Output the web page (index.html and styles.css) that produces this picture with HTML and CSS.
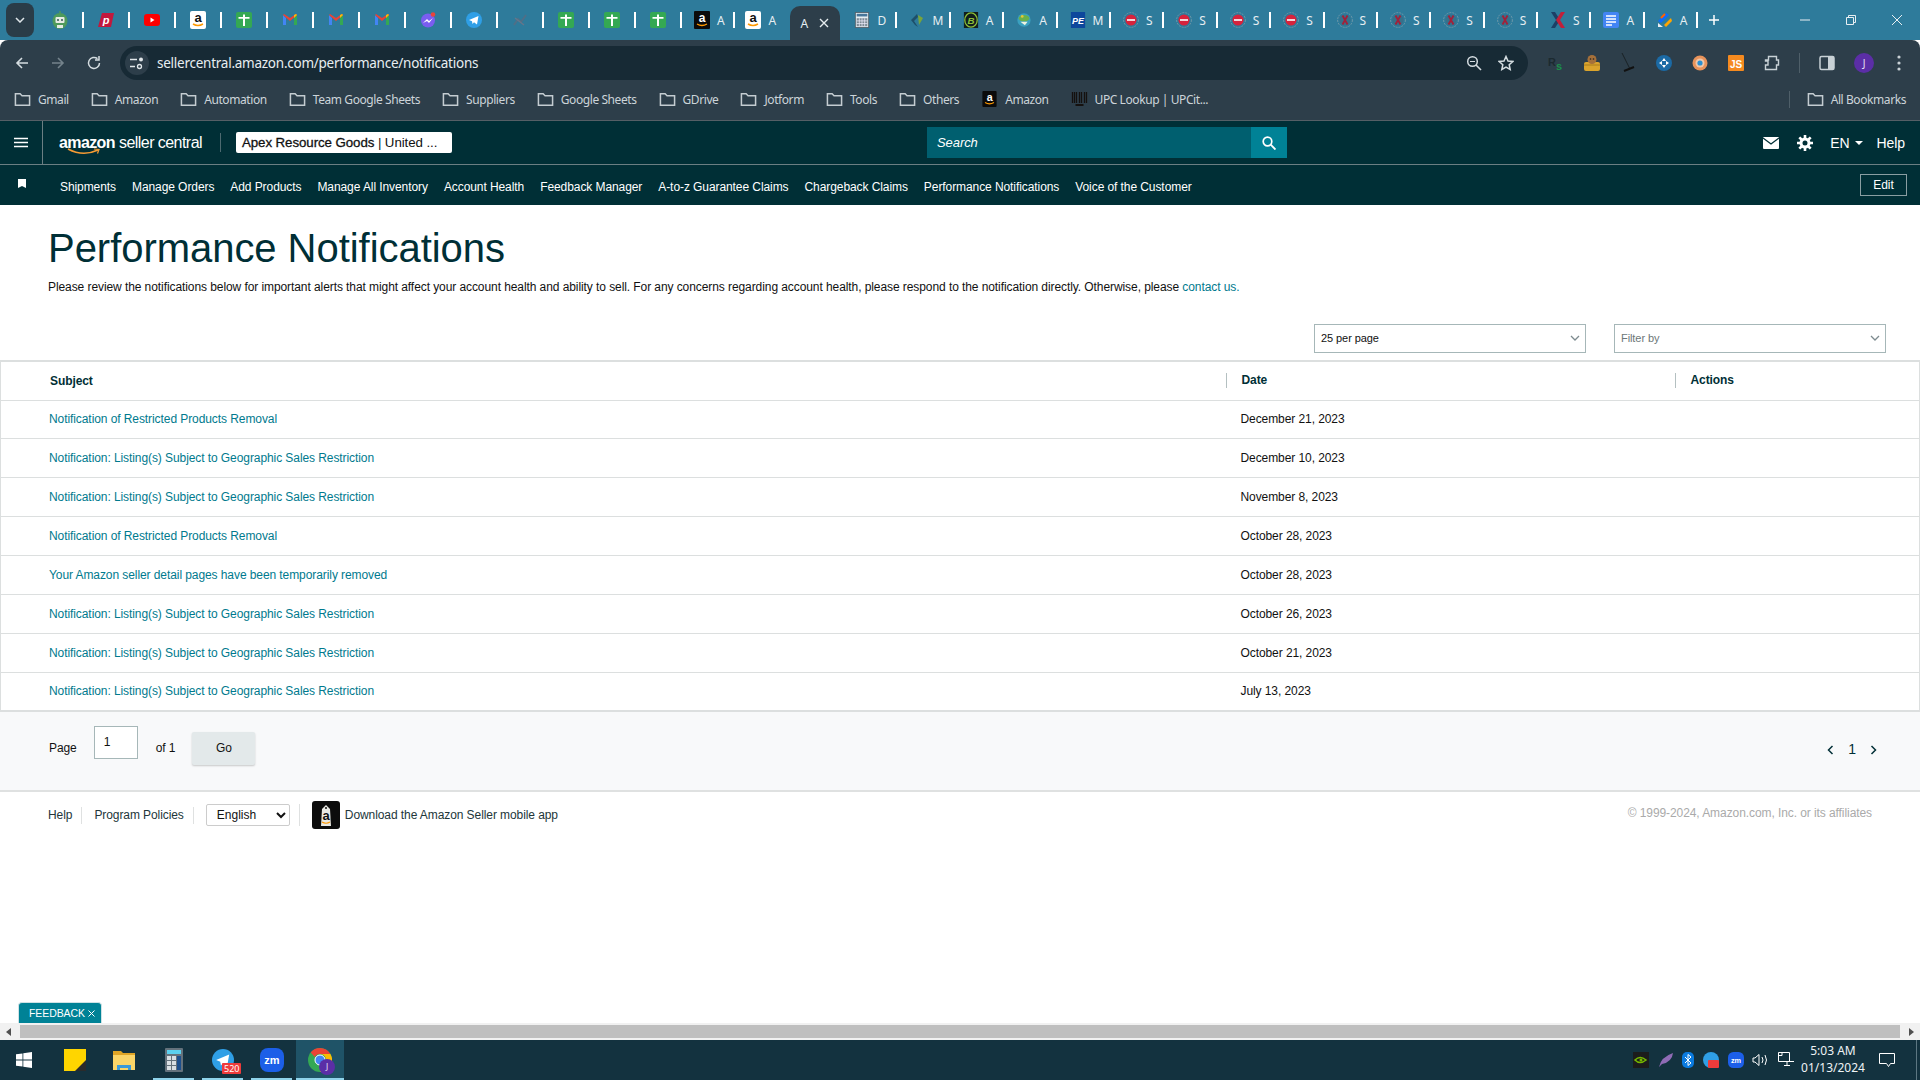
FILE: index.html
```html
<!DOCTYPE html>
<html lang="en">
<head>
  <meta charset="UTF-8">
  <title>Performance Notifications</title>
  <link rel="stylesheet" href="styles.css">
</head>
<body>
  <svg class="defs" width="0" height="0">
    <symbol id="i-folder" viewBox="0 0 18 16"><path d="M1.500 2.500h5l2 2h8v10h-15z" fill="none" stroke="#c4ccd1" stroke-width="1.600"/></symbol>
    <symbol id="i-sheet" viewBox="0 0 16 16"><rect width="16" height="16" rx="2" fill="#34a853"/><path d="M7 2.500h2V5h4.500v1.800H9V14H7V6.800H2.500V5H7z" fill="#fff"/></symbol>
    <symbol id="i-gmail" viewBox="0 0 16 16"><path d="M1 3v10h3V6z" fill="#4285f4"/><path d="M15 3v10h-3V6z" fill="#34a853"/><path d="M1 3l7 6 7-6-1-1-6 4-6-4z" fill="#ea4335"/><path d="M14 2l1 1-3 3V3z" fill="#fbbc04"/></symbol>
    <symbol id="i-amz-dark" viewBox="0 0 16 18"><rect width="16" height="18" rx="1" fill="#0b0b0b"/><text x="8" y="11" font-size="12" font-weight="700" text-anchor="middle" fill="#fff" font-family="Liberation Sans">a</text><path d="M3 13q5 3 10 0" stroke="#f90" stroke-width="1.300" fill="none"/></symbol>
    <symbol id="i-amz-light" viewBox="0 0 16 18"><rect width="16" height="18" rx="2" fill="#fff"/><text x="8" y="11" font-size="13" font-weight="700" text-anchor="middle" fill="#111" font-family="Liberation Sans">a</text><path d="M3 13q5 3 10 0" stroke="#f90" stroke-width="1.500" fill="none"/></symbol>
    <symbol id="i-stop" viewBox="0 0 16 16"><circle cx="8" cy="8" r="7.400" fill="none" stroke="#6d97a8" stroke-width="1" stroke-dasharray="2 1"/><circle cx="8" cy="8" r="5.600" fill="#d6233c"/><rect x="4" y="7" width="8" height="2" fill="#f4d6da"/></symbol>
    <symbol id="i-xc" viewBox="0 0 16 16"><circle cx="8" cy="8" r="7.400" fill="none" stroke="#6d97a8" stroke-width="1" stroke-dasharray="2 1"/><circle cx="8" cy="8" r="5.600" fill="#37708a"/><path d="M5.500 3.500l5 9M10.500 3.500l-5 9" stroke="#a3203a" stroke-width="1.800"/></symbol>
    <symbol id="i-tg" viewBox="0 0 16 16"><circle cx="8" cy="8" r="8" fill="#2f9fe6"/><path d="M3 8l9.500-4-1.500 8.500-3-2.200-1.500 1.700-.5-2.800z" fill="#fff"/></symbol>
    <symbol id="i-zm" viewBox="0 0 24 24"><rect width="24" height="24" rx="8" fill="#1c5fe8"/><text x="12" y="16" font-size="11" font-weight="700" text-anchor="middle" fill="#fff" font-family="Liberation Sans">zm</text></symbol>
  </svg>

  <div class="screen">
    <div class="tabstrip">
      <button class="tab-search"><svg width="10" height="6" viewBox="0 0 10 6"><path d="M1 1l4 4 4-4" fill="none" stroke="#dfe6ea" stroke-width="1.500"/></svg></button>
      <div class="tab"><svg class="fav fav-tall" viewBox="0 0 16 18"><ellipse cx="8" cy="10" rx="7.500" ry="8" fill="#4e9a5b"/><path d="M8 0v3" stroke="#4e9a5b" stroke-width="1.500"/><rect x="3.500" y="6" width="9" height="6" rx="1" fill="#e6ece4"/><circle cx="6" cy="9" r="1" fill="#355"/><circle cx="10" cy="9" r="1" fill="#355"/><rect x="5" y="14" width="6" height="3" fill="#e6ece4"/></svg></div>
      <div class="tab"><svg class="fav" viewBox="0 0 16 16"><path d="M4 1h12l-3 14H0z" fill="#c2183d"/><text x="8" y="12" font-size="11" font-weight="700" font-style="italic" text-anchor="middle" fill="#fff" font-family="Liberation Sans">p</text></svg></div>
      <div class="tab"><svg class="fav" viewBox="0 0 16 16"><rect y="2" width="16" height="12" rx="3" fill="#f00"/><path d="M6.500 5.500l4 2.500-4 2.500z" fill="#fff"/></svg></div>
      <div class="tab"><svg class="fav fav-tall"><use href="#i-amz-light"/></svg></div>
      <div class="tab"><svg class="fav"><use href="#i-sheet"/></svg></div>
      <div class="tab"><svg class="fav"><use href="#i-gmail"/></svg></div>
      <div class="tab"><svg class="fav"><use href="#i-gmail"/></svg></div>
      <div class="tab"><svg class="fav"><use href="#i-gmail"/></svg></div>
      <div class="tab"><svg class="fav" viewBox="0 0 16 16"><circle cx="8" cy="8.500" r="7" fill="#7a5df0"/><path d="M3 11l4-4 2 2 4-3-4 5-2-2z" fill="#fff"/><circle cx="13" cy="2.500" r="2.300" fill="#e8443a"/></svg></div>
      <div class="tab"><svg class="fav"><use href="#i-tg"/></svg></div>
      <div class="tab"><svg class="fav" viewBox="0 0 16 16"><path d="M2 13l4-6 3 3 5-7" fill="none" stroke="#4f6f87" stroke-width="2"/><path d="M3 6l9 7" stroke="#66768a" stroke-width="1.500"/></svg></div>
      <div class="tab"><svg class="fav"><use href="#i-sheet"/></svg></div>
      <div class="tab"><svg class="fav"><use href="#i-sheet"/></svg></div>
      <div class="tab"><svg class="fav"><use href="#i-sheet"/></svg></div>
      <div class="tab tab-wide"><svg class="fav fav-tall"><use href="#i-amz-dark"/></svg><span>A</span></div>
      <div class="tab tab-wide tab-noline"><svg class="fav fav-tall"><use href="#i-amz-light"/></svg><span>A</span></div>
      <div class="tab tab-active"><span>A</span><svg class="tab-x" width="10" height="10" viewBox="0 0 10 10"><path d="M1 1l8 8M9 1l-8 8" stroke="#e6ecef" stroke-width="1.400"/></svg></div>
      <div class="tab tab-wide tab-after"><svg class="fav" viewBox="0 0 16 18"><rect x=".5" y=".5" width="15" height="17" fill="#e6eef2" stroke="#54606a"/><rect x="2" y="2" width="12" height="3" fill="#47769a"/><path d="M2 7h12v9H2z" fill="#7d8b95"/><path d="M5 7v9M8 7v9M11 7v9M2 10h12M2 13h12" stroke="#eef" stroke-width=".8"/></svg><span>D</span></div>
      <div class="tab tab-wide"><svg class="fav" viewBox="0 0 16 16"><path d="M2 8l6-6 1 3-4 4 4 6-3-2z" fill="#1d4f6a"/><path d="M9 3l5 3-4 7z" fill="#7aa43a"/></svg><span>M</span></div>
      <div class="tab tab-wide"><svg class="fav" viewBox="0 0 16 18"><rect width="16" height="18" fill="#111e1c"/><ellipse cx="8" cy="9" rx="7" ry="8" fill="none" stroke="#8bbf3a" stroke-width="1.400"/><text x="8" y="13" font-size="11" font-weight="700" font-style="italic" text-anchor="middle" fill="#8bbf3a" font-family="Liberation Sans">B</text></svg><span>A</span></div>
      <div class="tab tab-wide"><svg class="fav" viewBox="0 0 16 18"><circle cx="8" cy="9" r="7.500" fill="#3aa0c0"/><ellipse cx="8" cy="7" rx="6" ry="3.500" fill="#6ab04a"/><circle cx="6" cy="5" r="1.500" fill="#e8c43a"/><path d="M4 11h8l-3 4z" fill="#eef3e0"/></svg><span>A</span></div>
      <div class="tab tab-wide"><svg class="fav" viewBox="0 0 16 18"><rect width="16" height="18" fill="#0d479c"/><text x="8" y="13" font-size="10" font-weight="700" font-style="italic" text-anchor="middle" fill="#fff" font-family="Liberation Sans">PE</text></svg><span>M</span></div>
      <div class="tab tab-wide"><svg class="fav"><use href="#i-stop"/></svg><span>S</span></div>
      <div class="tab tab-wide"><svg class="fav"><use href="#i-stop"/></svg><span>S</span></div>
      <div class="tab tab-wide"><svg class="fav"><use href="#i-stop"/></svg><span>S</span></div>
      <div class="tab tab-wide"><svg class="fav"><use href="#i-stop"/></svg><span>S</span></div>
      <div class="tab tab-wide"><svg class="fav"><use href="#i-xc"/></svg><span>S</span></div>
      <div class="tab tab-wide"><svg class="fav"><use href="#i-xc"/></svg><span>S</span></div>
      <div class="tab tab-wide"><svg class="fav"><use href="#i-xc"/></svg><span>S</span></div>
      <div class="tab tab-wide"><svg class="fav"><use href="#i-xc"/></svg><span>S</span></div>
      <div class="tab tab-wide"><svg class="fav" viewBox="0 0 16 16"><path d="M1 0h4l5 8-5 8H1l5-8z" fill="#1d3f66"/><path d="M15 0h-4L6 8l5 8h4l-5-8z" fill="#c21f3a"/></svg><span>S</span></div>
      <div class="tab tab-wide"><svg class="fav" viewBox="0 0 16 16"><rect width="16" height="16" rx="2" fill="#4285f4"/><path d="M3 4h10M3 7h10M3 10h10M3 13h6" stroke="#fff" stroke-width="1.400"/></svg><span>A</span></div>
      <div class="tab tab-wide"><svg class="fav" viewBox="0 0 16 16"><path d="M1 9l8-8 3 2-8 8z" fill="#0a6cff"/><path d="M7 13l7-7 1 3-6 6z" fill="#ffa600"/><path d="M1 11l5 4H1z" fill="#e9eef2"/><path d="M4 6l4-4" stroke="#ff6100" stroke-width="2"/></svg><span>A</span></div>
      <svg class="tab-new" width="12" height="12" viewBox="0 0 12 12"><path d="M6 1v10M1 6h10" stroke="#fff" stroke-width="1.500"/></svg>
      <div class="win-controls">
        <svg width="12" height="12" viewBox="0 0 12 12"><path d="M1 6h10" stroke="#e8eff2"/></svg>
        <svg width="12" height="12" viewBox="0 0 12 12"><path d="M1.500 3.500h7v7h-7zM3.500 3.500v-2h7v7h-2" fill="none" stroke="#e8eff2"/></svg>
        <svg width="12" height="12" viewBox="0 0 12 12"><path d="M1 1l10 10M11 1L1 11" stroke="#e8eff2"/></svg>
      </div>
    </div>

    <div class="toolbar">
      <svg class="nav-icon" viewBox="0 0 16 16"><path d="M14 8H3M8 3L3 8l5 5" fill="none" stroke="#d5dde1" stroke-width="1.600"/></svg>
      <svg class="nav-icon" viewBox="0 0 16 16"><path d="M2 8h11M8 3l5 5-5 5" fill="none" stroke="#74838c" stroke-width="1.600"/></svg>
      <svg class="nav-icon" viewBox="0 0 16 16"><path d="M13.500 8A5.500 5.500 0 1 1 11.500 3.700M13 1v4H9" fill="none" stroke="#d5dde1" stroke-width="1.500"/></svg>
      <div class="omnibox">
        <span class="site-info"><svg width="16" height="14" viewBox="0 0 16 14"><path d="M1 3.500h7M1 10.500h5" stroke="#e1e7ea" stroke-width="1.500"/><circle cx="12" cy="3.500" r="2" fill="#e1e7ea"/><circle cx="10.500" cy="10.500" r="2" fill="none" stroke="#e1e7ea" stroke-width="1.300"/></svg></span>
        <span class="url">sellercentral.amazon.com/performance/notifications</span>
        <svg class="omni-zoom" width="16" height="16" viewBox="0 0 16 16"><circle cx="6.500" cy="6.500" r="4.800" fill="none" stroke="#d5dde1" stroke-width="1.500"/><path d="M10 10l5 5" stroke="#d5dde1" stroke-width="1.600"/><path d="M4 6.500h5" stroke="#d5dde1"/></svg>
        <svg class="omni-star" width="16" height="16" viewBox="0 0 16 16"><path d="M8 1.500l2 4.500 4.800.5-3.600 3.200 1 4.800L8 12.100l-4.200 2.400 1-4.800L1.200 6.500 6 6z" fill="none" stroke="#d5dde1" stroke-width="1.500"/></svg>
      </div>
      <div class="extensions">
        <svg width="16" height="16" viewBox="0 0 16 16"><text x="0" y="11" font-size="11" font-weight="700" fill="#1c2a30" font-family="Liberation Sans">R</text><text x="8" y="15" font-size="11" font-weight="700" fill="#1b8f4b" font-family="Liberation Sans">s</text></svg>
        <svg width="16" height="18" viewBox="0 0 16 18"><rect x="0" y="8" width="16" height="9" rx="2" fill="#dba42c"/><circle cx="8" cy="5.500" r="4.500" fill="#a5703a"/><circle cx="6.500" cy="5" r=".8" fill="#222"/><circle cx="9.500" cy="5" r=".8" fill="#222"/><path d="M0 11h16" stroke="#a67a1c"/></svg>
        <svg width="16" height="20" viewBox="0 0 16 20"><path d="M2 0l8 16" stroke="#1a2226"/><path d="M4 18l10-4" stroke="#111" stroke-width="2"/></svg>
        <svg width="16" height="16" viewBox="0 0 16 16"><circle cx="8" cy="8" r="8" fill="#1b6aa5"/><path d="M8 3l2 3H6zM8 13l2-3H6zM3 8l3-2v4zM13 8l-3-2v4z" fill="#fff"/></svg>
        <svg width="16" height="16" viewBox="0 0 16 16"><circle cx="8" cy="8" r="7.500" fill="#e8935b"/><circle cx="8" cy="8" r="4.500" fill="#efc8ac"/><circle cx="8" cy="8" r="2.600" fill="#2a8fd0"/></svg>
        <svg width="16" height="16" viewBox="0 0 16 16"><rect width="16" height="16" rx="1" fill="#f58a1f"/><text x="8" y="13" font-size="10" font-weight="700" text-anchor="middle" fill="#fff" font-family="Liberation Sans">JS</text></svg>
        <svg width="16" height="16" viewBox="0 0 16 16"><path d="M1.500 5h3V1.500h8V5h2v5h-2v4.500h-11V10H4V6H1.500z" fill="none" stroke="#c8d1d6" stroke-width="1.400"/></svg>
        <span class="ext-sep"></span>
        <svg width="16" height="16" viewBox="0 0 16 16"><rect x="1" y="1.500" width="14" height="13" rx="1.500" fill="none" stroke="#c8d1d6" stroke-width="1.500"/><rect x="9" y="2" width="6" height="12" fill="#c8d1d6"/></svg>
        <span class="avatar">J</span>
        <svg class="ext-menu" width="4" height="16" viewBox="0 0 4 16"><circle cx="2" cy="2" r="1.600" fill="#c8d1d6"/><circle cx="2" cy="8" r="1.600" fill="#c8d1d6"/><circle cx="2" cy="14" r="1.600" fill="#c8d1d6"/></svg>
      </div>
    </div>

    <div class="bookmarks">
      <a class="bm"><svg class="bm-icon"><use href="#i-folder"/></svg>Gmail</a>
      <a class="bm"><svg class="bm-icon"><use href="#i-folder"/></svg>Amazon</a>
      <a class="bm"><svg class="bm-icon"><use href="#i-folder"/></svg>Automation</a>
      <a class="bm"><svg class="bm-icon"><use href="#i-folder"/></svg>Team Google Sheets</a>
      <a class="bm"><svg class="bm-icon"><use href="#i-folder"/></svg>Suppliers</a>
      <a class="bm"><svg class="bm-icon"><use href="#i-folder"/></svg>Google Sheets</a>
      <a class="bm"><svg class="bm-icon"><use href="#i-folder"/></svg>GDrive</a>
      <a class="bm"><svg class="bm-icon"><use href="#i-folder"/></svg>Jotform</a>
      <a class="bm"><svg class="bm-icon"><use href="#i-folder"/></svg>Tools</a>
      <a class="bm"><svg class="bm-icon"><use href="#i-folder"/></svg>Others</a>
      <a class="bm"><svg class="bm-icon"><use href="#i-amz-dark"/></svg>Amazon</a>
      <a class="bm"><svg class="bm-icon" viewBox="0 0 16 16"><path d="M1 1v11M3 1v11M5 1v11M8 1v11M10 1v11M13 1v11M15 1v11" stroke="#15110f" stroke-width="1.300"/><path d="M4 14h8" stroke="#15110f" stroke-width="2"/></svg>UPC Lookup | UPCit...</a>
      <a class="bm bm-all"><svg class="bm-icon"><use href="#i-folder"/></svg>All Bookmarks</a>
    </div>

    <header class="sc-header">
      <div class="sc-menu"><svg width="14" height="11" viewBox="0 0 14 11"><path d="M0 1.500h14M0 5.500h14M0 9.500h14" stroke="#fff" stroke-width="1.500"/></svg></div>
      <div class="sc-logo">
        <span class="sc-amazon">amazon</span><span class="sc-name">seller central</span>
        <svg class="sc-smile" width="34" height="8" viewBox="0 0 34 8"><path d="M1 1q15 8 30 1" fill="none" stroke="#f79c34" stroke-width="1.500"/><path d="M27 1l5 .5-1.500 4" fill="none" stroke="#f79c34" stroke-width="1.200"/></svg>
      </div>
      <div class="sc-account"><b>Apex Resource Goods</b> | United ...</div>
      <div class="sc-search">
        <span class="sc-search-text">Search</span>
        <button class="sc-search-btn"><svg width="14" height="14" viewBox="0 0 14 14"><circle cx="5.500" cy="5.500" r="4.300" fill="none" stroke="#fff" stroke-width="1.700"/><path d="M8.700 8.700L13.500 13.500" stroke="#fff" stroke-width="1.900"/></svg></button>
      </div>
      <div class="sc-right">
        <svg width="16" height="12" viewBox="0 0 16 12"><rect width="16" height="12" rx="1" fill="#fff"/><path d="M0 1l8 6 8-6" fill="none" stroke="#002f36" stroke-width="1.300"/></svg>
        <svg width="16" height="16" viewBox="0 0 16 16"><circle cx="8" cy="8" r="4" fill="none" stroke="#fff" stroke-width="3"/><path d="M8 0v3M8 13v3M0 8h3M13 8h3M2.300 2.300l2.200 2.200M11.500 11.500l2.200 2.200M13.700 2.300l-2.200 2.200M4.500 11.500l-2.200 2.200" stroke="#fff" stroke-width="2.600"/></svg>
        <span class="sc-lang">EN<i class="caret"></i></span>
        <span class="sc-help">Help</span>
      </div>
    </header>

    <nav class="sc-nav">
      <svg class="sc-pin" width="8" height="9" viewBox="0 0 8 9"><path d="M0 0h8v9L4 7 0 9z" fill="#fff"/></svg>
      <a>Shipments</a>
      <a>Manage Orders</a>
      <a>Add Products</a>
      <a>Manage All Inventory</a>
      <a>Account Health</a>
      <a>Feedback Manager</a>
      <a>A-to-z Guarantee Claims</a>
      <a>Chargeback Claims</a>
      <a>Performance Notifications</a>
      <a>Voice of the Customer</a>
      <button class="sc-edit">Edit</button>
    </nav>

    <main class="page">
      <div class="page-head">
        <h1>Performance Notifications</h1>
        <p>Please review the notifications below for important alerts that might affect your account health and ability to sell. For any concerns regarding account health, please respond to the notification directly. Otherwise, please <a class="link">contact us.</a></p>
      </div>

      <div class="filters">
        <div class="dropdown">25 per page<svg width="10" height="6" viewBox="0 0 10 6"><path d="M1 1l4 4 4-4" fill="none" stroke="#7d8b8f" stroke-width="1.300"/></svg></div>
        <div class="dropdown dropdown-empty">Filter by<svg width="10" height="6" viewBox="0 0 10 6"><path d="M1 1l4 4 4-4" fill="none" stroke="#7d8b8f" stroke-width="1.300"/></svg></div>
      </div>

      <table class="notices">
        <thead>
          <tr><th class="col-subject">Subject</th><th class="col-date"><span>Date</span></th><th class="col-actions"><span>Actions</span></th></tr>
        </thead>
        <tbody>
          <tr><td><a class="link">Notification of Restricted Products Removal</a></td><td>December 21, 2023</td><td></td></tr>
          <tr><td><a class="link">Notification: Listing(s) Subject to Geographic Sales Restriction</a></td><td>December 10, 2023</td><td></td></tr>
          <tr><td><a class="link">Notification: Listing(s) Subject to Geographic Sales Restriction</a></td><td>November 8, 2023</td><td></td></tr>
          <tr><td><a class="link">Notification of Restricted Products Removal</a></td><td>October 28, 2023</td><td></td></tr>
          <tr><td><a class="link">Your Amazon seller detail pages have been temporarily removed</a></td><td>October 28, 2023</td><td></td></tr>
          <tr><td><a class="link">Notification: Listing(s) Subject to Geographic Sales Restriction</a></td><td>October 26, 2023</td><td></td></tr>
          <tr><td><a class="link">Notification: Listing(s) Subject to Geographic Sales Restriction</a></td><td>October 21, 2023</td><td></td></tr>
          <tr><td><a class="link">Notification: Listing(s) Subject to Geographic Sales Restriction</a></td><td>July 13, 2023</td><td></td></tr>
        </tbody>
      </table>

      <div class="pager">
        <span>Page</span>
        <span class="pager-input">1</span>
        <span>of 1</span>
        <button class="pager-go">Go</button>
        <div class="pager-nums">
          <svg width="7" height="10" viewBox="0 0 7 10"><path d="M5.500 1L1.500 5l4 4" fill="none" stroke="#002f36" stroke-width="1.500"/></svg>
          <span class="pager-num">1</span>
          <svg width="7" height="10" viewBox="0 0 7 10"><path d="M1.500 1l4 4-4 4" fill="none" stroke="#002f36" stroke-width="1.500"/></svg>
        </div>
      </div>

      <footer class="page-foot">
        <a class="foot-link">Help</a>
        <a class="foot-link">Program Policies</a>
        <div class="lang-wrap"><select class="lang-select"><option>English</option></select></div>
        <svg class="app-icon" width="28" height="28" viewBox="0 0 28 28"><rect width="28" height="28" rx="3" fill="#0c0c0c"/><path d="M10 8l4-4 4 4 1 17H9z" fill="#e9e9e4"/><circle cx="14" cy="7" r="1" fill="#0c0c0c"/><text x="14" y="19" font-size="13" font-weight="700" text-anchor="middle" fill="#111" font-family="Liberation Sans">a</text><path d="M10 21q4 2.500 8 0" stroke="#f90" stroke-width="1.200" fill="none"/></svg>
        <span class="app-text">Download the Amazon Seller mobile app</span>
        <span class="copyright">© 1999-2024, Amazon.com, Inc. or its affiliates</span>
      </footer>

      <div class="feedback">FEEDBACK <svg width="7" height="7" viewBox="0 0 7 7"><path d="M.5.500l6 6M6.500.500l-6 6" stroke="#fff"/></svg></div>
    </main>

    <div class="hscroll">
      <i class="arrow arrow-l"></i>
      <div class="hscroll-thumb"></div>
      <i class="arrow arrow-r"></i>
    </div>

    <div class="taskbar">
      <div class="task-start"><svg width="16" height="16" viewBox="0 0 16 16"><path d="M0 2.300l6.500-.9v6.200H0zM7.300 1.300L16 0v7.600H7.300zM0 8.400h6.500v6.200L0 13.700zM7.300 8.400H16V16l-8.700-1.300z" fill="#fff"/></svg></div>
      <div class="task-app task-sticky"><svg width="22" height="22" viewBox="0 0 22 22"><rect width="22" height="22" fill="#ffd500"/><path d="M11 22l11-11v11z" fill="#2b2b2b"/></svg></div>
      <div class="task-app task-files"><svg width="22" height="20" viewBox="0 0 22 20"><path d="M0 1h8l2 2h12v3H0z" fill="#e0a526"/><rect y="5" width="22" height="15" fill="#fbd568"/><path d="M4 15h14v5h-3v-2H7v2H4z" fill="#3b9ad9"/></svg></div>
      <div class="task-app task-on"><svg width="18" height="24" viewBox="0 0 18 24"><rect width="18" height="24" rx="1" fill="#64727c"/><rect x="2" y="2" width="14" height="4" fill="#5bd0ee"/><path d="M2 8h4v4H2zM7 8h4v4H7zM2 13h4v4H2zM7 13h4v4H7zM2 18h4v4H2zM7 18h4v4H7z" fill="#d8dfe3"/><rect x="12" y="8" width="4" height="14" fill="#1c4f8c"/></svg></div>
      <div class="task-app task-on"><svg width="22" height="22"><use href="#i-tg"/></svg><span class="task-badge">520</span></div>
      <div class="task-app task-on"><svg width="24" height="24"><use href="#i-zm"/></svg></div>
      <div class="task-app task-on task-chrome"><svg width="24" height="24" viewBox="0 0 24 24"><circle cx="12" cy="12" r="12" fill="#34a853"/><path d="M12 0a12 12 0 0 1 10.400 6H12a6 6 0 0 0-5.200 3L2.700 4.400A12 12 0 0 1 12 0z" fill="#ea4335"/><path d="M22.400 6A12 12 0 0 1 12 24l5.200-9A6 6 0 0 0 12 6z" fill="#fbbc04"/><circle cx="12" cy="12" r="5" fill="#4285f4" stroke="#fff"/></svg><span class="task-avatar">J</span></div>
      <div class="tray">
        <svg width="16" height="16" viewBox="0 0 16 16"><rect width="16" height="16" fill="#1c1c1c"/><path d="M2 8q5-5 11 0-6 5-11 0z" fill="none" stroke="#76b900" stroke-width="1.600"/><circle cx="8" cy="8" r="1.500" fill="#76b900"/></svg>
        <svg width="16" height="16" viewBox="0 0 16 16"><path d="M1 15Q3 5 15 1 14 10 4 12z" fill="#8f6bb5"/></svg>
        <svg width="12" height="16" viewBox="0 0 12 16"><rect width="12" height="16" rx="5" fill="#0a7be0"/><path d="M3 5l6 6-3 2.500v-11l3 2.500-6 6" fill="none" stroke="#fff"/></svg>
        <svg width="16" height="16" viewBox="0 0 16 16"><circle cx="8" cy="8" r="8" fill="#2f9fe6"/><rect x="5" y="8" width="11" height="8" rx="1" fill="#ee3b3b"/></svg>
        <svg width="16" height="16"><use href="#i-zm"/></svg>
        <svg width="17" height="14" viewBox="0 0 17 14"><path d="M1 5h2l4-3.500v11L3 9H1zM10 4q2 3 0 6M13 2q3 5 0 10" fill="none" stroke="#fff"/></svg>
        <svg width="16" height="16" viewBox="0 0 16 16"><path d="M.5.500h11v9H.5zM4 .5v3H.5M7 9.500h9M6 13.500h6M9 9.500v4" fill="none" stroke="#fff"/></svg>
      </div>
      <div class="clock"><span>5:03 AM</span><span>01/13/2024</span></div>
      <svg class="task-notif" width="16" height="14" viewBox="0 0 16 14"><path d="M.5.500h15v10h-4l-2 3-2-3h-7z" fill="none" stroke="#fff"/></svg>
      <span class="task-peek"></span>
    </div>
  </div>
</body>
</html>
```

FILE: styles.css
```css
* {
  box-sizing: border-box;
}

html,
body {
  margin: 0;
  padding: 0;
  height: 100%;
  overflow: hidden;
}

body {
  font-family: "Liberation Sans", Arial, sans-serif;
  font-size: 12px;
  letter-spacing: -0.08px;
  color: #111;
  background: #fff;
}

.defs {
  display: none;
}

button {
  font-family: inherit;
  border: 0;
  padding: 0;
}

.screen {
  width: 1920px;
  height: 1080px;
  display: flex;
  flex-direction: column;
}

/* browser tab strip */
.tabstrip {
  height: 40px;
  flex: none;
  display: flex;
  align-items: stretch;
  background: #2e7b9b;
  color: #e6eef2;
  font-family: "Noto Sans", sans-serif;
  font-size: 12px;
  letter-spacing: 0;
}

.tab-search {
  width: 28px;
  height: 34px;
  margin: 3px 3px 0 6px;
  border-radius: 8px;
  background: #2a3c48;
  display: flex;
  align-items: center;
  justify-content: center;
}

.tab {
  width: 46px;
  flex: none;
  display: flex;
  align-items: center;
  justify-content: center;
  position: relative;
}

.tab::after {
  content: "";
  position: absolute;
  right: -1px;
  top: 12px;
  height: 16px;
  width: 2px;
  background: #fff;
}

.fav {
  width: 16px;
  height: 16px;
  flex: none;
}

.fav-tall {
  height: 18px;
}

.tab-wide {
  width: 53.4px;
  justify-content: flex-start;
  padding-left: 13px;
}

.tab-wide span {
  margin-left: 7px;
}

.tab-noline {
  width: 56px;
  padding-left: 11px;
}

.tab-noline::after,
.tab-active::after {
  display: none;
}

.tab-active {
  width: 50px;
  margin-top: 6px;
  justify-content: flex-start;
  padding-left: 10px;
  background: #2d3e4a;
  border-radius: 10px 10px 0 0;
}

.tab-x {
  margin-left: 11px;
}

.tab-after {
  width: 56px;
  padding-left: 14px;
}

.tab-new {
  align-self: center;
  margin-left: 11px;
}

.win-controls {
  margin-left: auto;
  padding-right: 17px;
  display: flex;
  align-items: center;
  gap: 34px;
}

/* browser toolbar */
.toolbar {
  height: 40px;
  flex: none;
  display: flex;
  align-items: center;
  background: #2d3e4a;
  border-radius: 8px 8px 0 0;
  padding: 6px 0 0 14px;
  letter-spacing: 0;
}

.nav-icon {
  width: 16px;
  height: 16px;
  margin-right: 20px;
}

.omnibox {
  width: 1408px;
  height: 34px;
  margin-left: -2px;
  border-radius: 17px;
  background: #172a35;
  display: flex;
  align-items: center;
  padding-left: 5px;
  font-family: "Noto Sans", sans-serif;
  font-size: 13.5px;
  letter-spacing: -0.25px;
  color: #e8eef1;
}

.site-info {
  width: 24px;
  height: 24px;
  border-radius: 12px;
  background: #2d3e4a;
  display: flex;
  align-items: center;
  justify-content: center;
}

.url {
  margin-left: 8px;
}

.omni-zoom {
  margin-left: auto;
}

.omni-star {
  margin: 0 14px 0 16px;
}

.extensions {
  display: flex;
  align-items: center;
  margin-left: 20px;
  gap: 20px;
}

.ext-sep {
  width: 1px;
  height: 20px;
  background: #4f5f69;
  margin: 0 -1px;
}

.avatar {
  width: 20px;
  height: 20px;
  margin-left: -1px;
  border-radius: 10px;
  background: #5b2ea6;
  color: #e9e2f5;
  font-family: "Noto Sans", sans-serif;
  font-size: 10px;
  text-align: center;
  line-height: 20px;
}

.ext-menu {
  margin-left: 3px;
}

/* bookmarks */
.bookmarks {
  height: 41px;
  flex: none;
  display: flex;
  align-items: center;
  gap: 22px;
  padding: 0 14px 2px 14px;
  background: #2d3e4a;
  border-bottom: 1px solid #555f66;
  color: #ccd4d9;
  font-family: "Noto Sans", sans-serif;
  font-size: 12px;
  letter-spacing: -0.42px;
}

.bm {
  display: flex;
  align-items: center;
  gap: 7px;
  white-space: nowrap;
}

.bm-icon {
  width: 17px;
  height: 16px;
  flex: none;
}

.bm-all {
  margin-left: auto;
  padding-left: 17px;
  border-left: 1px solid #4f5f69;
}

/* seller central header */
.sc-header {
  height: 44px;
  flex: none;
  display: flex;
  align-items: center;
  background: #002f36;
  border-bottom: 1px solid #6b7f83;
  color: #fff;
  position: relative;
}

.sc-menu {
  width: 43px;
  height: 100%;
  padding-left: 14px;
  border-right: 1px solid #6b7f83;
  display: flex;
  align-items: center;
}

.sc-logo {
  width: 162px;
  height: 19px;
  margin-left: 16px;
  border-right: 1px solid #4d6a70;
  display: flex;
  align-items: center;
  position: relative;
  white-space: nowrap;
}

.sc-amazon {
  font-size: 16px;
  font-weight: 700;
  letter-spacing: -0.6px;
}

.sc-name {
  margin-left: 4px;
  font-size: 16px;
  letter-spacing: -0.55px;
}

.sc-smile {
  position: absolute;
  left: 8px;
  top: 15px;
}

.sc-account {
  width: 216px;
  height: 21px;
  margin-left: 15px;
  padding-left: 6px;
  border-radius: 2px;
  background: #fff;
  color: #111;
  font-size: 13.3px;
  line-height: 21px;
  white-space: nowrap;
}

.sc-account b {
  font-weight: 400;
  -webkit-text-stroke: 0.3px #111;
}

.sc-search {
  width: 360px;
  height: 31px;
  margin-left: 475px;
  background: #005f6f;
  display: flex;
  align-items: center;
  justify-content: space-between;
  padding-left: 10px;
  font-size: 13px;
  font-style: italic;
}

.sc-search-btn {
  width: 36px;
  height: 31px;
  background: #008296;
  display: flex;
  align-items: center;
  justify-content: center;
}

.sc-right {
  margin-left: auto;
  padding-right: 15px;
  display: flex;
  align-items: center;
  gap: 18px;
  font-size: 14px;
}

.sc-lang {
  display: flex;
  align-items: center;
  margin-left: -1px;
}

.sc-help {
  margin-left: -4px;
}

.caret {
  margin-left: 5px;
  border: 4px solid transparent;
  border-top-color: #fff;
  border-bottom: 0;
}

.sc-nav {
  height: 40px;
  flex: none;
  display: flex;
  align-items: center;
  gap: 16px;
  padding: 4px 13px 0 18px;
  background: #002f36;
  color: #fff;
  white-space: nowrap;
}

.sc-pin {
  margin: -8px 18px 0 0;
}

.sc-edit {
  margin: -5px 0 0 auto;
  width: 47px;
  height: 22px;
  background: transparent;
  border: 1px solid #8a9ea2;
  color: #fff;
  font-size: 12px;
}

/* page */
.page {
  flex: 1;
  position: relative;
  display: flex;
  flex-direction: column;
}

.page-head {
  padding: 19px 48px 0;
}

.page-head h1 {
  margin: 0;
  font-size: 40px;
  line-height: 48px;
  font-weight: 400;
  letter-spacing: -0.04px;
  color: #002f36;
}

.page-head p {
  margin: 7px 0 0;
  line-height: 16px;
  color: #111;
}

.link {
  color: #007a8e;
}

.filters {
  display: flex;
  justify-content: flex-end;
  gap: 28px;
  margin-top: 29px;
  padding-right: 34px;
}

.dropdown {
  width: 272px;
  height: 29px;
  padding: 0 5px 1px 6px;
  border: 1px solid #a6b7b8;
  font-size: 11px;
  color: #111;
  display: flex;
  align-items: center;
  justify-content: space-between;
}

.dropdown-empty {
  color: #6c7778;
}

.notices {
  width: 100%;
  margin-top: 7px;
  border-collapse: collapse;
  table-layout: fixed;
  border-top: 2px solid #dcdfdf;
  border-left: 1px solid #dcdfdf;
  border-right: 1px solid #dcdfdf;
  border-bottom: 2px solid #dcdfdf;
}

.notices th {
  height: 39px;
  padding: 0;
  text-align: left;
  font-size: 12px;
  color: #002f36;
}

.notices td {
  height: 38.9px;
  padding: 0;
  border-top: 1px solid #dcdfdf;
}

.col-subject {
  width: 1225px;
  padding-left: 49px !important;
}

.col-actions {
  width: 245px;
}

.notices td:first-child {
  padding-left: 48px;
}

.notices td:nth-child(2) {
  padding-left: 15px;
}

.notices th span {
  display: block;
  height: 15px;
  line-height: 15px;
  padding-left: 15px;
  border-left: 1px solid #b4c0c1;
}

.pager {
  height: 80px;
  flex: none;
  display: flex;
  align-items: center;
  padding: 0 43px 6px 49px;
  background: #f8f9fa;
  border-bottom: 2px solid #dfe1e1;
}

.pager-input {
  width: 44px;
  height: 33px;
  margin: -11px 18px 0 17px;
  padding: 8px 0 0 9px;
  background: #fff;
  border: 1px solid #a6b7b8;
}

.pager-go {
  width: 63px;
  height: 33px;
  margin-left: 17px;
  background: #e3e9ea;
  border-radius: 2px;
  box-shadow: 0 1px 2px rgba(0, 0, 0, 0.2);
  font-size: 12px;
  color: #111;
}

.pager-nums {
  margin: 4px 0 0 auto;
  display: flex;
  align-items: center;
  gap: 14px;
  font-size: 14px;
  color: #002f36;
}

.pager-num {
  margin-top: -3px;
}

.page-foot {
  display: flex;
  align-items: center;
  height: 46px;
  padding: 0 48px;
  position: relative;
}

.foot-link {
  padding-right: 9px;
  margin-right: 12px;
  border-right: 1px solid #dfe1e1;
  line-height: 17px;
  color: #22363a;
}

.lang-wrap {
  padding-right: 9px;
  margin-right: 12px;
  border-right: 1px solid #dfe1e1;
  line-height: 0;
}

.lang-select {
  width: 84px;
  height: 22px;
  border: 1px solid #ccc;
  border-radius: 2px;
  background: #fff;
  padding-left: 6px;
  font-family: inherit;
  font-size: 12px;
  color: #111;
}

.app-text {
  margin-left: 5px;
  color: #22363a;
}

.copyright {
  margin-left: auto;
  color: #aaa;
  padding-bottom: 5px;
}

.feedback {
  position: absolute;
  left: 18px;
  bottom: 0;
  width: 84px;
  height: 21px;
  background: #008296;
  border: 1px solid #cfe2e5;
  border-bottom: 0;
  border-radius: 4px 4px 0 0;
  color: #fff;
  font-size: 10.5px;
  line-height: 20px;
  padding-left: 10px;
}

.hscroll {
  height: 17px;
  flex: none;
  background: #f1f1f1;
  display: flex;
  align-items: center;
  justify-content: space-between;
}

.hscroll-thumb {
  width: 1880px;
  height: 13px;
  background: #bfbfbf;
}

.arrow {
  width: 17px;
  display: flex;
  justify-content: center;
}

.arrow::before {
  content: "";
  border: 4px solid transparent;
}

.arrow-l::before {
  border-right: 5px solid #505050;
  border-left: 0;
}

.arrow-r::before {
  border-left: 5px solid #505050;
  border-right: 0;
}

/* windows taskbar */
.taskbar {
  height: 40px;
  flex: none;
  display: flex;
  align-items: stretch;
  background: #13323f;
  color: #eef3f5;
  font-family: "Noto Sans", sans-serif;
  letter-spacing: 0;
  position: relative;
}

.task-start {
  width: 48px;
  display: flex;
  align-items: center;
  justify-content: center;
}

.task-app {
  width: 49px;
  display: flex;
  align-items: center;
  justify-content: center;
  position: relative;
}

.task-on::after {
  content: "";
  position: absolute;
  left: 4px;
  right: 4px;
  bottom: 0;
  height: 2px;
  background: #8fd3ea;
}

.task-sticky {
  margin-left: 2px;
}

.task-files {
  margin-right: 1px;
}

.task-chrome {
  width: 48px;
  background: #1f5367;
}

.task-chrome::after {
  left: 0;
  right: 0;
}

.task-badge {
  position: absolute;
  left: 24px;
  top: 23px;
  padding: 0 2px;
  background: #ee3b3b;
  border-radius: 1px;
  color: #fff;
  font-size: 9px;
  line-height: 11px;
}

.task-avatar {
  position: absolute;
  left: 23px;
  top: 19px;
  width: 16px;
  height: 16px;
  border-radius: 8px;
  background: #5b2ea6;
  color: #e9e2f5;
  font-size: 8px;
  line-height: 16px;
  text-align: center;
}

.tray {
  margin-left: auto;
  display: flex;
  align-items: center;
  gap: 8.7px;
}

.clock {
  width: 80px;
  margin: -2px 0 0 -1px;
  display: flex;
  flex-direction: column;
  align-items: center;
  justify-content: center;
  font-size: 12px;
  line-height: 17px;
}

.task-notif {
  align-self: center;
  margin: 0 25px 0 6px;
}

.task-peek {
  position: absolute;
  right: 3px;
  top: 0;
  bottom: 0;
  width: 1px;
  background: #5d7782;
}
```
